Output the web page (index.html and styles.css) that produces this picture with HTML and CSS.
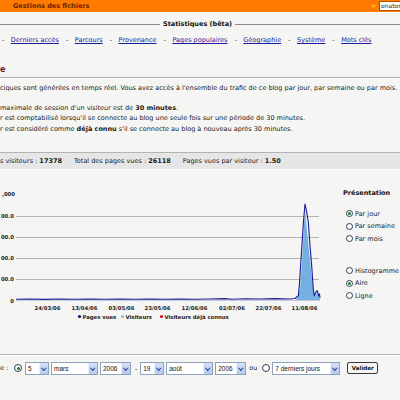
FILE: index.html
```html
<!DOCTYPE html>
<html lang="fr">
<head>
<meta charset="utf-8">
<title>Statistiques</title>
<link rel="stylesheet" href="styles.css">
</head>
<body>
<header class="topbar">
  <span class="topbar-title">Gestions des fichiers</span>
  <span class="topbar-right"><span class="topbar-icon">»</span><span class="topbar-input">onator</span></span>
</header>

<div class="section-head"><span class="rule rule-left"></span><span class="section-title">Statistiques (bêta)</span><span class="rule"></span></div>

<nav class="nav">
  <span class="sep">-</span><a href="#">Derniers accès</a>
  <span class="sep">-</span><a href="#">Parcours</a>
  <span class="sep">-</span><a href="#">Provenance</a>
  <span class="sep">-</span><a href="#">Pages populaires</a>
  <span class="sep">-</span><a href="#">Géographie</a>
  <span class="sep">-</span><a href="#">Système</a>
  <span class="sep">-</span><a href="#">Mots clés</a>
</nav>

<h1 class="page-title">e</h1>

<p class="intro">ciques sont générées en temps réel. Vous avez accès à l'ensemble du trafic de ce blog par jour, par semaine ou par mois.</p>
<p class="notes">maximale de session d'un visiteur est de <b>30 minutes</b>.<br>r est comptabilisé lorsqu'il se connecte au blog une seule fois sur une période de 30 minutes.<br>r est considéré comme <b>déjà connu</b> s'il se connecte au blog à nouveau après 30 minutes.</p>

<div class="totals">
  <span class="total">s visiteurs : <b>17378</b></span>
  <span class="total">Total des pages vues : <b>26118</b></span>
  <span class="total">Pages vues par visiteur : <b>1.50</b></span>
</div>

<div class="chart-row">
  <svg class="chart" width="330" height="160" viewBox="0 171 330 160">
    <g class="grid">
      <line x1="16" y1="217.5" x2="319" y2="217.5"/>
      <line x1="16" y1="238.5" x2="319" y2="238.5"/>
      <line x1="16" y1="259.5" x2="319" y2="259.5"/>
      <line x1="16" y1="280.5" x2="319" y2="280.5"/>
      <line x1="16" y1="301.5" x2="320" y2="301.5" class="base"/>
    </g>
    <g class="ylab">
      <text x="15" y="197">,000</text>
      <text x="14" y="219">00.0</text>
      <text x="14" y="240">00.0</text>
      <text x="14" y="261">00.0</text>
      <text x="14" y="282">00.0</text>
      <text x="14" y="303.5">0</text>
    </g>
    <polygon class="area" points="296,301 298,297 300,290 302,262 304,226 305,210 307,232 309,252 311,270 313,289 315,297 317,294 319,296 320,301"/>
    <polyline class="line" points="16,300.2 30,300 45,300.4 60,300 75,300.3 90,300 105,300.3 120,300 135,300.3 150,300 165,300.3 180,300 195,300.2 210,300 225,299.6 232,300.2 245,299.8 260,300 275,299.6 290,300 295,299.5 298.3,296.7 299.3,286.7 301.7,250 303.5,222 305,205 306.5,212 308.3,223 310,246.7 311.7,266.7 313.3,290 314.3,296.7 316,293 317.3,291.7 318.7,296.7 319.5,295 320,299"/>
    <g class="xlab">
      <text x="47.5" y="311">24/03/06</text>
      <text x="84.5" y="311">13/04/06</text>
      <text x="121.5" y="311">03/05/06</text>
      <text x="157.5" y="311">23/05/06</text>
      <text x="194.5" y="311">12/06/06</text>
      <text x="232" y="311">02/07/06</text>
      <text x="268.5" y="311">22/07/06</text>
      <text x="304.5" y="311">11/08/06</text>
    </g>
    <g class="legend">
      <circle cx="79.5" cy="317.5" r="1.6" fill="#101080"/>
      <text x="82.5" y="320">Pages vues</text>
      <circle cx="122.5" cy="317.5" r="1.6" fill="#8cc4d0"/>
      <text x="125.5" y="320">Visiteurs</text>
      <circle cx="161.5" cy="317.5" r="1.6" fill="#d01010"/>
      <text x="164.5" y="320">Visiteurs déjà connus</text>
    </g>
  </svg>

  <div class="presentation">
    <div class="pres-title">Présentation</div>
    <div class="radio-group">
      <label class="radio-item"><span class="radio checked"></span>Par jour</label>
      <label class="radio-item"><span class="radio"></span>Par semaine</label>
      <label class="radio-item"><span class="radio"></span>Par mois</label>
    </div>
    <div class="radio-group">
      <label class="radio-item"><span class="radio"></span>Histogramme 3D</label>
      <label class="radio-item"><span class="radio checked"></span>Aire</label>
      <label class="radio-item"><span class="radio"></span>Ligne</label>
    </div>
  </div>
</div>

<div class="range">
  <span class="range-label">e :</span>
  <span class="radio checked"></span>
  <span class="select w-day">5</span>
  <span class="select w-month">mars</span>
  <span class="select w-year">2006</span>
  <span class="dash">-</span>
  <span class="select w-day">19</span>
  <span class="select w-month">août</span>
  <span class="select w-year">2006</span>
  <span class="ou">ou</span>
  <span class="radio"></span>
  <span class="select w-last">7 derniers jours</span>
  <button class="btn" type="button">Valider</button>
</div>
</body>
</html>
```

FILE: styles.css
```css
* { box-sizing: border-box; }

html, body {
  margin: 0;
  padding: 0;
}

body {
  width: 400px;
  height: 400px;
  overflow: hidden;
  background: #f5f5f4;
  font-family: "DejaVu Sans", Verdana, sans-serif;
  font-size: 6.5px;
  color: #1a1a1a;
}

/* top orange bar */
.topbar {
  height: 13px;
  background: #ff7a00;
  border-bottom: 1px solid #fff;
  display: flex;
  align-items: center;
  justify-content: space-between;
}
.topbar-title {
  margin-left: 13px;
  font-weight: bold;
  color: #6e2400;
  font-size: 6.5px;
}
.topbar-right {
  display: flex;
  align-items: center;
  gap: 3px;
}
.topbar-icon {
  color: #ffd24a;
  font-size: 7px;
  font-weight: bold;
  line-height: 1;
}
.topbar-input {
  width: 21px;
  height: 10px;
  background: #fff;
  border: 1px solid #b35400;
  border-right: 0;
  font-size: 6px;
  line-height: 8px;
  padding-left: 1px;
  overflow: hidden;
  white-space: nowrap;
  color: #222;
}

/* section header */
.section-head {
  display: flex;
  align-items: center;
  margin-top: 6px;
  height: 10px;
}
.rule {
  flex: 1;
  height: 1px;
  background: #8c8c8c;
}
.rule-left {
  flex: 0 0 160px;
}
.section-title {
  font-weight: bold;
  padding: 0 3px 0 3px;
  color: #111;
}

/* nav */
.nav {
  margin-top: 6px;
  height: 10px;
  line-height: 10px;
  display: flex;
  white-space: nowrap;
}
.nav a {
  color: #1c1c9a;
  text-decoration: underline;
}
.nav .sep {
  margin: 0 6.5px 0 7px;
  color: #222;
}
.nav .sep:first-child {
  margin-left: 2px;
}

/* title */
.page-title {
  margin: 18px 0 0 0;
  height: 15px;
  line-height: 13px;
  font-size: 8px;
  font-weight: bold;
  color: #6a1020;
  border-bottom: 1px solid #a9a9a9;
  box-shadow: 0 1px 0 #fff;
}

.intro {
  margin: 5px 0 0 0;
  line-height: 10px;
  white-space: nowrap;
}
.notes {
  margin: 10px 0 0 0;
  line-height: 10.3px;
  white-space: nowrap;
}

/* totals band */
.totals {
  margin-top: 18px;
  height: 18px;
  background: #e6e6e6;
  border-top: 1px solid #b4b4b4;
  border-bottom: 1px solid #fafafa;
  display: flex;
  align-items: center;
  gap: 12px;
  white-space: nowrap;
}

/* chart */
.chart-row {
  display: flex;
  height: 160px;
}
.chart {
  display: block;
  flex: 0 0 330px;
}
.grid line {
  stroke: #b4b4b4;
  stroke-width: 1;
}
.grid .base {
  stroke: #c8c8d8;
}
.ylab text, .xlab text, .legend text {
  font-family: "DejaVu Sans", Verdana, sans-serif;
  font-weight: bold;
  font-size: 5.3px;
  fill: #222;
}
.ylab text {
  text-anchor: end;
}
.xlab text {
  text-anchor: middle;
}
.area {
  fill: #76b0e2;
}
.line {
  fill: none;
  stroke: #1a1a98;
  stroke-width: 1.1;
  stroke-linejoin: round;
}

.presentation {
  padding: 18px 0 0 13px;
  white-space: nowrap;
}
.pres-title {
  font-weight: bold;
  height: 10px;
  line-height: 10px;
  color: #111;
}
.radio-group {
  margin-top: 11px;
  display: flex;
  flex-direction: column;
  gap: 2.5px;
}
.radio-group + .radio-group {
  margin-top: 22px;
}
.radio-item {
  display: flex;
  align-items: center;
  gap: 2px;
  height: 10px;
  margin-left: 3px;
}
.radio {
  display: inline-block;
  width: 7px;
  height: 7px;
  border: 1px solid #2c3e50;
  border-radius: 50%;
  background: #fff;
  position: relative;
  flex: 0 0 7px;
}
.radio.checked::after {
  content: "";
  position: absolute;
  left: 1px;
  top: 1px;
  width: 3px;
  height: 3px;
  border-radius: 50%;
  background: #1e7a2c;
}

/* range form */
.range {
  margin-top: 24px;
  border-top: 1px solid #b4b4b4;
  box-shadow: inset 0 1px 0 #fff;
  padding-top: 7px;
  display: flex;
  align-items: center;
  white-space: nowrap;
  font-family: "Liberation Sans", Arial, sans-serif;
  font-size: 6.5px;
}
.range-label {
  font-family: "DejaVu Sans", Verdana, sans-serif;
  margin-right: 4px;
  width: 10px;
}
.range > .radio {
  width: 8px;
  height: 8px;
  flex-basis: 8px;
  margin-right: 3px;
}
.range > .radio.checked::after {
  left: 1.5px;
  top: 1.5px;
}
.select {
  position: relative;
  height: 13px;
  line-height: 11px;
  background: #fff;
  border: 1px solid #8fa2bd;
  padding-left: 2px;
  margin-right: 2px;
  color: #111;
}
.select::after {
  content: "";
  position: absolute;
  right: 0;
  top: 0;
  bottom: 0;
  width: 8px;
  background: #c3d2f2 linear-gradient(#d6e1f8, #b6c8ef);
  border-left: 1px solid #e8eefc;
}
.select::before {
  content: "";
  position: absolute;
  right: 2.5px;
  top: 3px;
  width: 2.5px;
  height: 2.5px;
  border-right: 1.2px solid #243a8c;
  border-bottom: 1.2px solid #243a8c;
  transform: rotate(45deg);
  z-index: 1;
}
.w-day { width: 24px; }
.w-month { width: 47px; }
.w-year { width: 31px; }
.w-last { width: 68px; }
.dash {
  margin: 0 3px 0 2px;
}
.ou {
  font-family: "DejaVu Sans", Verdana, sans-serif;
  margin: 0 5px 0 1px;
}
.range > .radio:not(.checked) {
  margin-right: 2px;
}
.btn {
  margin-left: 5px;
  height: 12px;
  width: 31px;
  padding: 0;
  font-family: "DejaVu Sans", Verdana, sans-serif;
  font-size: 5.5px;
  font-weight: bold;
  color: #111;
  background: #f4f4f0;
  border: 1px solid #3a3a3a;
  border-radius: 2px;
}
```
